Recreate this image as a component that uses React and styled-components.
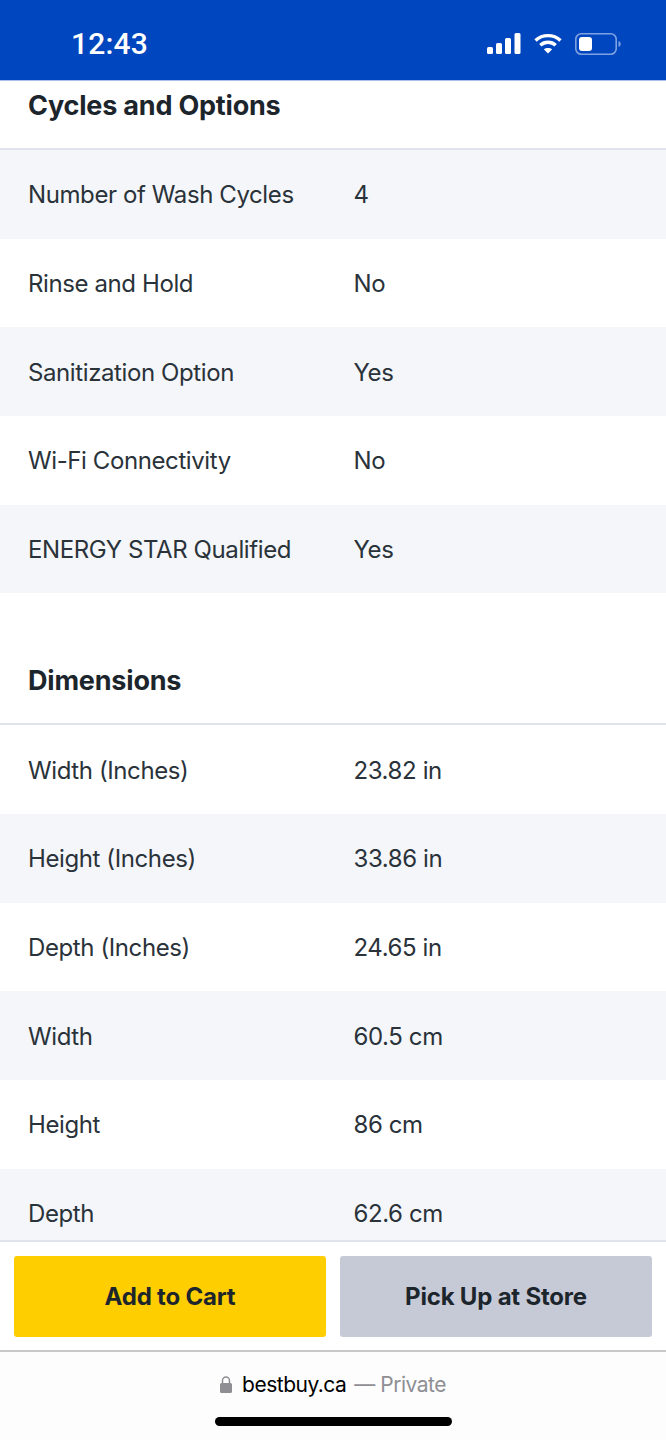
import React from "react";
import styled, { createGlobalStyle } from "styled-components";

const Global = createGlobalStyle`
  html, body { margin: 0; padding: 0; background: #fff; }
  * { box-sizing: border-box; }
`;

const Page = styled.div`
  width: 666px;
  height: 1440px;
  display: flex;
  flex-direction: column;
  overflow: hidden;
  font-family: Inter, "Liberation Sans", sans-serif;
  color: #1d252c;
`;

const StatusBar = styled.header`
  height: 81px;
  flex: none;
  background: #0046be;
  border-bottom: 1px solid #a9c0e8;
  display: flex;
  align-items: center;
  justify-content: space-between;
  padding: 7px 45px 0 71px;
`;

const Time = styled.span`
  font-family: Roboto, Inter, sans-serif;
  font-size: 30px;
  font-weight: 500;
  letter-spacing: 0.2px;
  color: #fff;
`;

const StatusIcons = styled.div`
  display: flex;
  align-items: center;
  gap: 13px;
`;

const Content = styled.main`
  flex: 1;
  min-height: 0;
  overflow: hidden;
`;

const SectionTitle = styled.h2`
  margin: 0;
  height: 69px;
  padding: 0 28px;
  font-size: 27px;
  line-height: 50px;
  font-weight: 700;
  letter-spacing: -0.2px;
  color: #1d252c;
  border-bottom: 2px solid #e0e3ec;
`;

const SectionGap = styled.div`
  height: 63px;
`;

const Row = styled.div`
  height: 88.67px;
  display: grid;
  grid-template-columns: 325.5px 1fr;
  align-items: center;
  padding: 1px 0 0 28px;
  font-size: 24px;
  letter-spacing: -0.4px;
  color: #2a323a;
  background: ${(p) => (p.$shaded ? "#f4f6f9" : "#fff")};
`;

const Footer = styled.footer`
  flex: none;
  height: 200px;
  background: #fff;
  display: flex;
  flex-direction: column;
`;

const Actions = styled.div`
  height: 112px;
  flex: none;
  border-top: 2px solid #e0e3ec;
  border-bottom: 2px solid #c9c9cb;
  display: flex;
  gap: 14px;
  padding: 14px 14px 13px;
`;

const ActionButton = styled.button`
  flex: 1;
  border: 0;
  border-radius: 3px;
  background: ${(p) => (p.$primary ? "#ffce00" : "#c5cad6")};
  color: #1d252c;
  font-family: Inter, sans-serif;
  font-size: 24px;
  font-weight: 700;
  letter-spacing: -0.2px;
`;

const BrowserBar = styled.div`
  flex: 1;
  background: #fdfdfd;
  display: flex;
  flex-direction: column;
  align-items: center;
`;

const Address = styled.div`
  display: flex;
  align-items: center;
  height: 65px;
  font-family: Inter, sans-serif;
  font-size: 21px;
  letter-spacing: -0.5px;
  color: #000;
`;

const LockIcon = styled.svg`
  margin-right: 10px;
`;

const Private = styled.span`
  color: #8e8e93;
  margin-left: 8px;
`;

const HomeBar = styled.div`
  width: 237px;
  height: 9px;
  border-radius: 5px;
  background: #000;
`;

const cycles = [
  ["Number of Wash Cycles", "4"],
  ["Rinse and Hold", "No"],
  ["Sanitization Option", "Yes"],
  ["Wi-Fi Connectivity", "No"],
  ["ENERGY STAR Qualified", "Yes"],
];

const dimensions = [
  ["Width (Inches)", "23.82 in"],
  ["Height (Inches)", "33.86 in"],
  ["Depth (Inches)", "24.65 in"],
  ["Width", "60.5 cm"],
  ["Height", "86 cm"],
  ["Depth", "62.6 cm"],
];

const Signal = () => (
  <svg width="34" height="21" viewBox="0 0 34 21" fill="#fff">
    <rect x="0" y="14" width="6" height="7" rx="1.5" />
    <rect x="9" y="10" width="6" height="11" rx="1.5" />
    <rect x="18" y="5" width="6" height="16" rx="1.5" />
    <rect x="27.5" y="0" width="6" height="21" rx="1.5" />
  </svg>
);

const Wifi = () => (
  <svg width="28" height="21" viewBox="0 0 28 21" fill="none" stroke="#fff" strokeWidth="3.4">
    <path d="M1.5 7.6C8.5 1 19.5 1 26.5 7.6" />
    <path d="M6.3 12.2C10.6 8.2 17.4 8.2 21.7 12.2" />
    <path d="M14 20.5L9.8 16.3C12.2 14.4 15.8 14.4 18.2 16.3Z" fill="#fff" stroke="none" />
  </svg>
);

const Battery = () => (
  <svg width="46" height="22" viewBox="0 0 46 22" fill="none">
    <rect x="0.8" y="0.8" width="40.4" height="20.4" rx="5.5" stroke="#7fa3e2" strokeWidth="1.6" />
    <rect x="4" y="4" width="13" height="14" rx="3" fill="#fff" />
    <path d="M43.5 8v6c1.4-.5 2.2-1.6 2.2-3s-.8-2.5-2.2-3Z" fill="#7fa3e2" />
  </svg>
);

const Rows = ({ items, shadedFirst }) =>
  items.map(([label, value], i) => (
    <Row key={label} $shaded={(i % 2 === 0) === shadedFirst}>
      <span>{label}</span>
      <span>{value}</span>
    </Row>
  ));

export default function App() {
  return (
    <Page>
      <Global />
      <StatusBar>
        <Time>12:43</Time>
        <StatusIcons>
          <Signal />
          <Wifi />
          <Battery />
        </StatusIcons>
      </StatusBar>
      <Content>
        <SectionTitle>Cycles and Options</SectionTitle>
        <Rows items={cycles} shadedFirst />
        <SectionGap />
        <SectionTitle>Dimensions</SectionTitle>
        <Rows items={dimensions} shadedFirst={false} />
      </Content>
      <Footer>
        <Actions>
          <ActionButton $primary>Add to Cart</ActionButton>
          <ActionButton>Pick Up at Store</ActionButton>
        </Actions>
        <BrowserBar>
          <Address>
            <LockIcon width="12" height="17" viewBox="0 0 12 17" fill="#8e8e93">
              <path d="M1.5 7h9A1.5 1.5 0 0 1 12 8.5v7a1.5 1.5 0 0 1-1.5 1.5h-9A1.5 1.5 0 0 1 0 15.5v-7A1.5 1.5 0 0 1 1.5 7Z" />
              <path d="M2.5 8V4.5a3.5 3.5 0 0 1 7 0V8" fill="none" stroke="#8e8e93" strokeWidth="1.5" />
            </LockIcon>
            bestbuy.ca<Private>— Private</Private>
          </Address>
          <HomeBar />
        </BrowserBar>
      </Footer>
    </Page>
  );
}
